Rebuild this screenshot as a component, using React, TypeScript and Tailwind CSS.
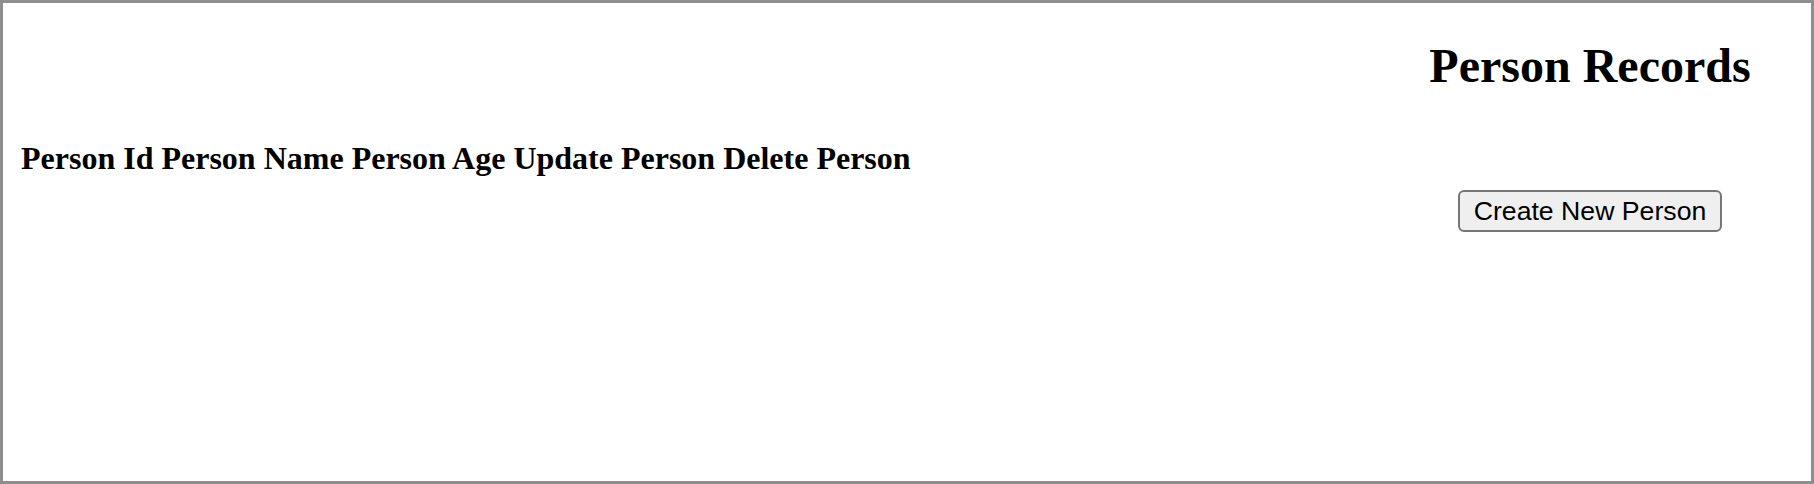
import React from 'react';

const columns = ['Person Id', 'Person Name', 'Person Age', 'Update Person', 'Delete Person'];

export default function App() {
  return (
    <div className="box-border h-[484px] w-full border-[3px] border-[#8e8e8e] bg-white text-black">
      <div className="flex items-start justify-between">
        <div className="pl-[12px] pt-[131px]">
          <table className="border-separate border-spacing-[4px]">
            <thead>
              <tr>
                {columns.map((col) => (
                  <th
                    key={col}
                    className="p-[2px] text-left font-['Liberation_Serif',serif] text-[32px] font-bold leading-[36px] whitespace-nowrap"
                  >
                    {col}
                  </th>
                ))}
              </tr>
            </thead>
            <tbody></tbody>
          </table>
        </div>

        <div className="mr-[16px] flex w-[410px] flex-col items-center pt-[35px]">
          <h2 className="font-['Liberation_Serif',serif] text-[48px] font-bold leading-[55px]">
            Person Records
          </h2>
          <button
            type="button"
            className="mt-[97px] box-border h-[42px] rounded-[6px] border-2 border-[#767676] bg-[#efefef] px-[14px] font-['Liberation_Sans',Arial,sans-serif] text-[26.67px] leading-[34px] text-black"
          >
            Create New Person
          </button>
        </div>
      </div>
    </div>
  );
}
